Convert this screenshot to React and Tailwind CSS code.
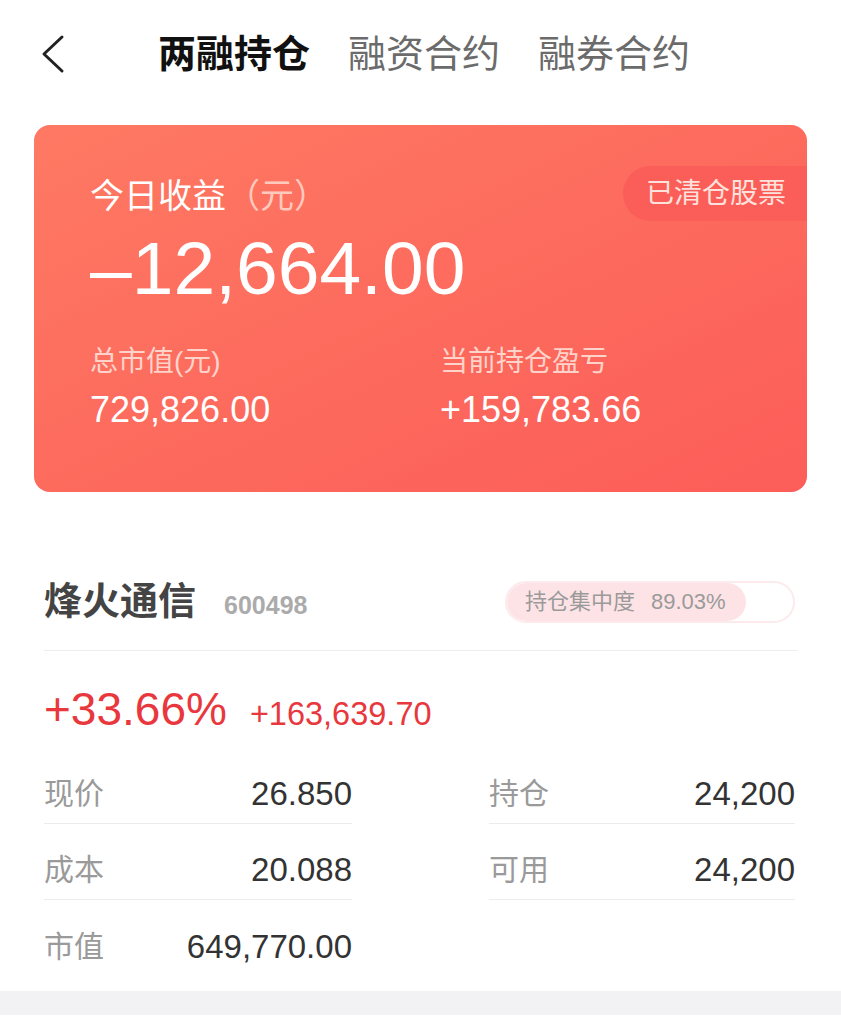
import React from "react";

const font = { fontFamily: '"Liberation Sans", "Noto Sans CJK SC", sans-serif' };

const tabs = [
  { label: "两融持仓", active: true },
  { label: "融资合约" },
  { label: "融券合约" },
];

const rows = [
  [
    { label: "现价", value: "26.850" },
    { label: "持仓", value: "24,200" },
  ],
  [
    { label: "成本", value: "20.088" },
    { label: "可用", value: "24,200" },
  ],
  [{ label: "市值", value: "649,770.00" }],
];

const Cell = ({ label, value, line }) => (
  <div className={"flex h-[76px] items-end justify-between pb-[9px] " + (line ? "border-b border-[#ececec]" : "")}>
    <span className="text-[30px] leading-[40px] text-[#9a9a9a]">{label}</span>
    <span className="text-[33px] leading-[40px] text-[#333]">{value}</span>
  </div>
);

export default function App() {
  return (
    <div className="w-[841px] min-h-[1024px] bg-white" style={font}>
      {/* 顶部导航 */}
      <div className="flex h-[106px] items-center pt-[2px]">
        <div className="w-[158px] pl-[40px]">
          <svg width="26" height="40" viewBox="0 0 26 40" fill="none">
            <path d="M22 3 L4 20 L22 37" stroke="#222" strokeWidth="3" strokeLinecap="round" strokeLinejoin="round" />
          </svg>
        </div>
        <div className="flex gap-[38px]">
          {tabs.map((t) => (
            <span
              key={t.label}
              className={
                "text-[38px] leading-[46px] " +
                (t.active ? "font-bold text-[#111]" : "text-[#6b6b6b]")
              }
            >
              {t.label}
            </span>
          ))}
        </div>
      </div>

      {/* 收益卡片 */}
      <div className="relative mx-[34px] mt-[19px] h-[367px] overflow-hidden rounded-[16px] bg-[linear-gradient(155deg,#ff8468_0%,#fe7462_45%,#fd615b_100%)]">
        <div className="absolute left-[-160px] top-[-330px] h-[770px] w-[1160px] rounded-full bg-[#fb4f52]/20"></div>
        <div className="absolute right-0 top-[41px] flex h-[55px] items-center rounded-l-full bg-[#fa5a58]/80 pl-[23px] pr-[21px] text-[28px] text-[#ffe1dc]">
          已清仓股票
        </div>
        <div className="relative pl-[56px] pt-[51px]">
          <div className="text-[34px] leading-[40px] text-white">
            今日收益<span className="text-[#ffc9bd]">（元）</span>
          </div>
          <div className="mt-[12px] text-[75px] leading-[80px] text-white">–12,664.00</div>
          <div className="mt-[37px] grid grid-cols-[350px_1fr]">
            <div>
              <div className="text-[28px] leading-[34px] text-[#ffd3c9]">总市值(元)</div>
              <div className="mt-[11px] text-[36px] leading-[40px] text-white">729,826.00</div>
            </div>
            <div>
              <div className="text-[28px] leading-[34px] text-[#ffd3c9]">当前持仓盈亏</div>
              <div className="mt-[11px] text-[36px] leading-[40px] text-white">+159,783.66</div>
            </div>
          </div>
        </div>
      </div>

      {/* 个股 */}
      <div className="mx-[44px]">
        <div className="mt-[74px] flex h-[85px] items-center justify-between border-b border-[#ededed] pb-[13px]">
          <div className="flex items-baseline gap-[28px]">
            <span className="text-[38px] font-bold leading-[46px] text-[#444]">烽火通信</span>
            <span className="text-[25px] font-bold text-[#ababab]">600498</span>
          </div>
          <div className="relative mr-[2px] h-[42px] w-[290px] overflow-hidden rounded-full border-2 border-[#fdeaec]">
            <div className="absolute inset-y-0 left-0 w-[239px] rounded-full bg-[#fde3e6]"></div>
            <div className="relative flex h-full items-center pl-[18px] text-[22px] text-[#9a9a9a]">
              持仓集中度<span className="ml-[16px]">89.03%</span>
            </div>
          </div>
        </div>

        <div className="mt-[33px] flex items-baseline gap-[23px] text-[#e8383d]">
          <span className="text-[46px] leading-[50px]">+33.66%</span>
          <span className="text-[32.5px]">+163,639.70</span>
        </div>

        <div className="mt-[9px] grid grid-cols-[308px_306px] justify-between pr-[2px]">
          {rows.map((r, i) =>
            [0, 1].map((j) =>
              r[j] ? (
                <Cell key={i + "-" + j} label={r[j].label} value={r[j].value} line={i < 2} />
              ) : (
                <div key={i + "-" + j}></div>
              )
            )
          )}
        </div>
      </div>

      <div className="mt-[15px] h-[24px] bg-[#f2f2f4]"></div>
    </div>
  );
}
